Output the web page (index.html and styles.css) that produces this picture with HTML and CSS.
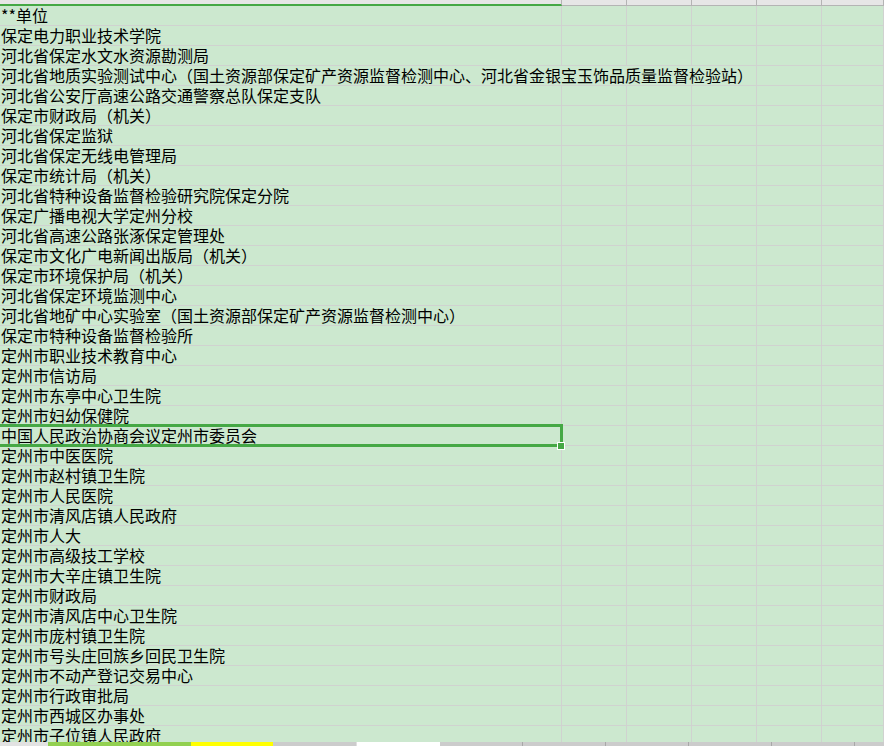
FILE: index.html
```html
<!DOCTYPE html>
<html lang="zh-CN">
<head>
<meta charset="utf-8">
<title>单位</title>
<link rel="stylesheet" href="styles.css">
</head>
<body>
<div class="sheet">
  <div class="colhead">
    <div class="ch ch-a"></div><div class="ch"></div><div class="ch"></div><div class="ch"></div><div class="ch"></div><div class="ch"></div>
  </div>
  <div class="rows">
    <div class="row"><div class="cell a">**单位</div><div class="cell"></div><div class="cell"></div><div class="cell"></div><div class="cell"></div><div class="cell"></div></div>
    <div class="row"><div class="cell a">保定电力职业技术学院</div><div class="cell"></div><div class="cell"></div><div class="cell"></div><div class="cell"></div><div class="cell"></div></div>
    <div class="row"><div class="cell a">河北省保定水文水资源勘测局</div><div class="cell"></div><div class="cell"></div><div class="cell"></div><div class="cell"></div><div class="cell"></div></div>
    <div class="row"><div class="cell a span4">河北省地质实验测试中心（国土资源部保定矿产资源监督检测中心、河北省金银宝玉饰品质量监督检验站）</div><div class="cell"></div><div class="cell"></div></div>
    <div class="row"><div class="cell a">河北省公安厅高速公路交通警察总队保定支队</div><div class="cell"></div><div class="cell"></div><div class="cell"></div><div class="cell"></div><div class="cell"></div></div>
    <div class="row"><div class="cell a">保定市财政局（机关）</div><div class="cell"></div><div class="cell"></div><div class="cell"></div><div class="cell"></div><div class="cell"></div></div>
    <div class="row"><div class="cell a">河北省保定监狱</div><div class="cell"></div><div class="cell"></div><div class="cell"></div><div class="cell"></div><div class="cell"></div></div>
    <div class="row"><div class="cell a">河北省保定无线电管理局</div><div class="cell"></div><div class="cell"></div><div class="cell"></div><div class="cell"></div><div class="cell"></div></div>
    <div class="row"><div class="cell a">保定市统计局（机关）</div><div class="cell"></div><div class="cell"></div><div class="cell"></div><div class="cell"></div><div class="cell"></div></div>
    <div class="row"><div class="cell a">河北省特种设备监督检验研究院保定分院</div><div class="cell"></div><div class="cell"></div><div class="cell"></div><div class="cell"></div><div class="cell"></div></div>
    <div class="row"><div class="cell a">保定广播电视大学定州分校</div><div class="cell"></div><div class="cell"></div><div class="cell"></div><div class="cell"></div><div class="cell"></div></div>
    <div class="row"><div class="cell a">河北省高速公路张涿保定管理处</div><div class="cell"></div><div class="cell"></div><div class="cell"></div><div class="cell"></div><div class="cell"></div></div>
    <div class="row"><div class="cell a">保定市文化广电新闻出版局（机关）</div><div class="cell"></div><div class="cell"></div><div class="cell"></div><div class="cell"></div><div class="cell"></div></div>
    <div class="row"><div class="cell a">保定市环境保护局（机关）</div><div class="cell"></div><div class="cell"></div><div class="cell"></div><div class="cell"></div><div class="cell"></div></div>
    <div class="row"><div class="cell a">河北省保定环境监测中心</div><div class="cell"></div><div class="cell"></div><div class="cell"></div><div class="cell"></div><div class="cell"></div></div>
    <div class="row"><div class="cell a">河北省地矿中心实验室（国土资源部保定矿产资源监督检测中心）</div><div class="cell"></div><div class="cell"></div><div class="cell"></div><div class="cell"></div><div class="cell"></div></div>
    <div class="row"><div class="cell a">保定市特种设备监督检验所</div><div class="cell"></div><div class="cell"></div><div class="cell"></div><div class="cell"></div><div class="cell"></div></div>
    <div class="row"><div class="cell a">定州市职业技术教育中心</div><div class="cell"></div><div class="cell"></div><div class="cell"></div><div class="cell"></div><div class="cell"></div></div>
    <div class="row"><div class="cell a">定州市信访局</div><div class="cell"></div><div class="cell"></div><div class="cell"></div><div class="cell"></div><div class="cell"></div></div>
    <div class="row"><div class="cell a">定州市东亭中心卫生院</div><div class="cell"></div><div class="cell"></div><div class="cell"></div><div class="cell"></div><div class="cell"></div></div>
    <div class="row"><div class="cell a">定州市妇幼保健院</div><div class="cell"></div><div class="cell"></div><div class="cell"></div><div class="cell"></div><div class="cell"></div></div>
    <div class="row"><div class="cell a">中国人民政治协商会议定州市委员会</div><div class="cell"></div><div class="cell"></div><div class="cell"></div><div class="cell"></div><div class="cell"></div></div>
    <div class="row"><div class="cell a">定州市中医医院</div><div class="cell"></div><div class="cell"></div><div class="cell"></div><div class="cell"></div><div class="cell"></div></div>
    <div class="row"><div class="cell a">定州市赵村镇卫生院</div><div class="cell"></div><div class="cell"></div><div class="cell"></div><div class="cell"></div><div class="cell"></div></div>
    <div class="row"><div class="cell a">定州市人民医院</div><div class="cell"></div><div class="cell"></div><div class="cell"></div><div class="cell"></div><div class="cell"></div></div>
    <div class="row"><div class="cell a">定州市清风店镇人民政府</div><div class="cell"></div><div class="cell"></div><div class="cell"></div><div class="cell"></div><div class="cell"></div></div>
    <div class="row"><div class="cell a">定州市人大</div><div class="cell"></div><div class="cell"></div><div class="cell"></div><div class="cell"></div><div class="cell"></div></div>
    <div class="row"><div class="cell a">定州市高级技工学校</div><div class="cell"></div><div class="cell"></div><div class="cell"></div><div class="cell"></div><div class="cell"></div></div>
    <div class="row"><div class="cell a">定州市大辛庄镇卫生院</div><div class="cell"></div><div class="cell"></div><div class="cell"></div><div class="cell"></div><div class="cell"></div></div>
    <div class="row"><div class="cell a">定州市财政局</div><div class="cell"></div><div class="cell"></div><div class="cell"></div><div class="cell"></div><div class="cell"></div></div>
    <div class="row"><div class="cell a">定州市清风店中心卫生院</div><div class="cell"></div><div class="cell"></div><div class="cell"></div><div class="cell"></div><div class="cell"></div></div>
    <div class="row"><div class="cell a">定州市庞村镇卫生院</div><div class="cell"></div><div class="cell"></div><div class="cell"></div><div class="cell"></div><div class="cell"></div></div>
    <div class="row"><div class="cell a">定州市号头庄回族乡回民卫生院</div><div class="cell"></div><div class="cell"></div><div class="cell"></div><div class="cell"></div><div class="cell"></div></div>
    <div class="row"><div class="cell a">定州市不动产登记交易中心</div><div class="cell"></div><div class="cell"></div><div class="cell"></div><div class="cell"></div><div class="cell"></div></div>
    <div class="row"><div class="cell a">定州市行政审批局</div><div class="cell"></div><div class="cell"></div><div class="cell"></div><div class="cell"></div><div class="cell"></div></div>
    <div class="row"><div class="cell a">定州市西城区办事处</div><div class="cell"></div><div class="cell"></div><div class="cell"></div><div class="cell"></div><div class="cell"></div></div>
    <div class="row"><div class="cell a">定州市子位镇人民政府</div><div class="cell"></div><div class="cell"></div><div class="cell"></div><div class="cell"></div><div class="cell"></div></div>
  </div>
  <div class="selection"><span class="handle"></span></div>
  <div class="tabs">
    <div class="tab t-gray"></div>
    <div class="tab t-green"></div>
    <div class="tab t-yellow"></div>
    <div class="tab t-mid"></div>
    <div class="tab t-white"></div>
    <div class="tab t-rest"></div>
    <div class="tab t-rest"></div>
    <div class="tab t-rest"></div>
    <div class="tab t-rest"></div>
    <div class="tab t-rest"></div>
    <div class="tab t-end"></div>
  </div>
</div>
</body>
</html>
```
FILE: styles.css
```css
html, body {
  margin: 0;
  padding: 0;
  width: 884px;
  height: 746px;
  overflow: hidden;
  background: #cce8cf;
}

.sheet {
  position: relative;
  width: 884px;
  height: 746px;
  display: flex;
  flex-direction: column;
  overflow: hidden;
  font-family: "Noto Sans CJK SC", "Noto Sans", sans-serif;
  font-size: 16px;
  color: #000;
}

.colhead {
  display: grid;
  grid-template-columns: 562px 65px 65px 65px 65px 1fr;
  height: 6px;
  flex: none;
}

.ch {
  box-sizing: border-box;
  background: #e6e6e6;
  border-right: 1px solid #b4b4b4;
  border-bottom: 1px solid #b4b4b4;
}

.ch-a {
  border-bottom: 2px solid #45a845;
}

.rows {
  flex: none;
  height: 736px;
  overflow: hidden;
}

.row {
  display: grid;
  grid-template-columns: 562px 65px 65px 65px 65px 1fr;
  height: 20px;
}

.cell {
  box-sizing: border-box;
  height: 20px;
  border-right: 1px solid #d0d2d0;
  border-bottom: 1px solid #d0d2d0;
}

.cell.a {
  padding-left: 1px;
  line-height: 19px;
  white-space: nowrap;
  overflow: visible;
}

.cell.span4 {
  grid-column: span 4;
}

.selection {
  position: absolute;
  left: -3px;
  top: 424px;
  width: 566px;
  height: 23px;
  box-sizing: border-box;
  border: 3px solid #45a845;
  pointer-events: none;
}

.handle {
  position: absolute;
  left: 557px;
  top: 15px;
  width: 8px;
  height: 8px;
  box-sizing: border-box;
  background: #45a845;
  border: 1px solid #ffffff;
}

.tabs {
  display: flex;
  height: 4px;
  flex: none;
}

.tab {
  height: 4px;
  flex: none;
  box-sizing: border-box;
}

.t-gray { width: 48px; background: #e2e2e2; }
.t-green { width: 143px; background: #92d050; }
.t-yellow { width: 82px; background: #ffff00; }
.t-mid { width: 84px; background: #cccccc; border-right: 1px solid #e0e0e0; }
.t-white { width: 83px; background: #ffffff; }
.t-rest { width: 83px; background: #cccccc; border-right: 1px solid #a8a8a8; }
.t-end { flex: 1; background: #cccccc; }
```
